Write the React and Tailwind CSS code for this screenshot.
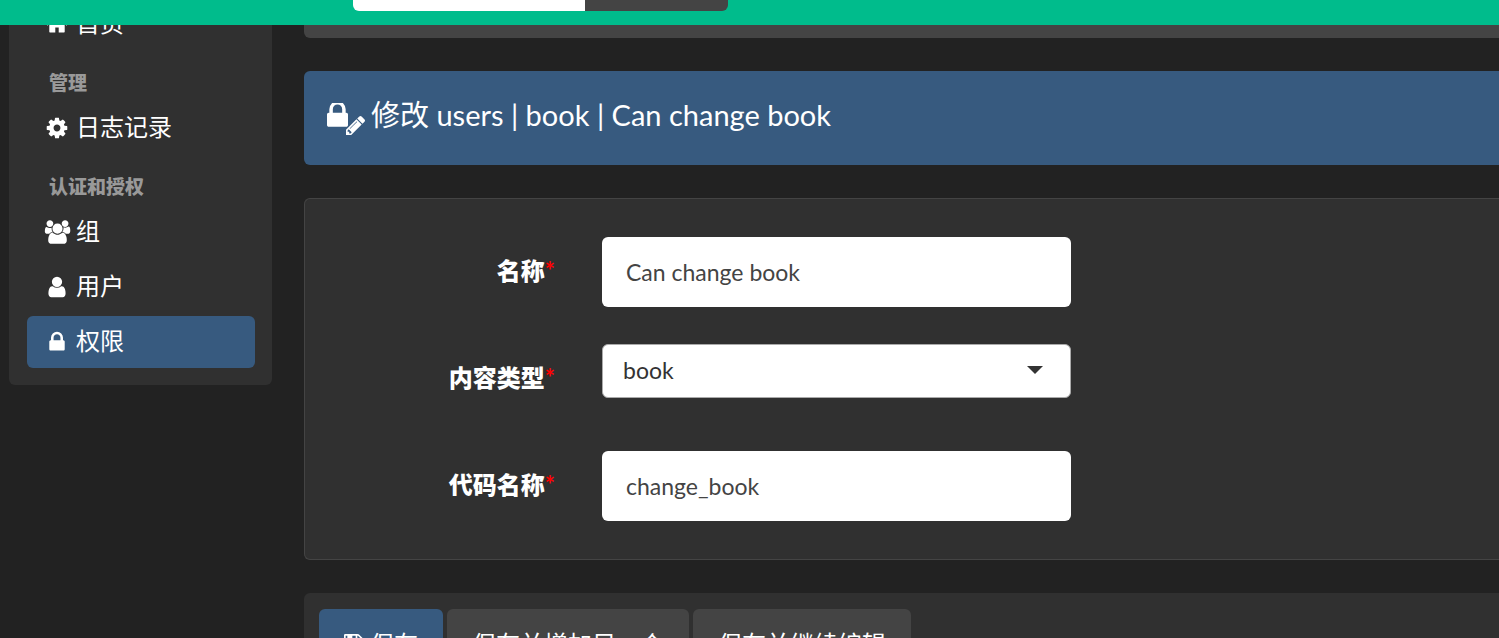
import React from "react";

const PATHS = {
  home: "M1472 992v480q0 26-19 45t-45 19h-384v-384h-256v384h-384q-26 0-45-19t-19-45v-480q0-1 .5-3t.5-3l575-474 575 474q1 2 1 6zm223-69l-62 74q-8 9-21 11h-3q-13 0-21-7l-692-577-692 577q-12 8-24 7-13-2-21-11l-62-74q-8-10-7-23.5t11-21.5l719-599q32-26 76-26t76 26l244 204v-195q0-14 9-23t23-9h192q14 0 23 9t9 23v408l219 182q10 8 11 21.5t-7 23.5z",
  cog: "M1152 896q0-106-75-181t-181-75-181 75-75 181 75 181 181 75 181-75 75-181zm512-109v222q0 12-8 23t-20 13l-185 28q-19 54-39 91 35 50 107 138 10 12 10 25t-9 23q-27 37-99 108t-94 71q-12 0-26-9l-138-108q-44 23-91 38-16 136-29 186-7 28-36 28h-222q-14 0-24.5-8.5t-11.5-21.5l-28-184q-49-16-90-37l-141 107q-10 9-25 9-14 0-25-11-126-114-165-168-7-10-7-23 0-12 8-23 15-21 51-66.5t54-70.5q-27-50-41-99l-183-27q-13-2-21-12.5t-8-23.5v-222q0-12 8-23t19-13l186-28q14-46 39-92-40-57-107-138-10-12-10-24 0-10 9-23 26-36 98.5-107.5t94.5-71.5q13 0 26 10l138 107q44-23 91-38 16-136 29-186 7-28 36-28h222q14 0 24.5 8.5t11.5 21.5l28 184q49 16 90 37l142-107q9-9 24-9 13 0 25 10 129 119 165 170 7 8 7 22 0 12-8 23-15 21-51 66.5t-54 70.5q26 50 41 98l183 28q13 2 21 12.5t8 23.5z",
  users: "M657 896q-162 5-265 128h-134q-82 0-138-40.5t-56-118.5q0-353 124-353 6 0 43.5 21t97.5 42.5 119 21.5q67 0 133-23-5 37-5 66 0 159 93 287zm1071 637q0 120-73 189.5t-194 69.5h-874q-121 0-194-69.5t-73-189.5q0-53 3.5-103.5t14-109 26.5-108.5 43-97.5 62-81 85.5-53.5 111.5-20q10 0 43 21.5t73 48 107 48 135 21.5 135-21.5 107-48 73-48 43-21.5q61 0 111.5 20t85.5 53.5 62 81 43 97.5 26.5 108.5 14 109 3.5 103.5zm-1024-1277q0 106-75 181t-181 75-181-75-75-181 75-181 181-75 181 75 75 181zm704 384q0 159-112.5 271.5t-271.5 112.5-271.5-112.5-112.5-271.5 112.5-271.5 271.5-112.5 271.5 112.5 112.5 271.5zm576 225q0 78-56 118.5t-138 40.5h-134q-103-123-265-128 93-128 93-287 0-29-5-66 66 23 133 23 59 0 119-21.5t97.5-42.5 43.5-21q124 0 124 353zm-128-609q0 106-75 181t-181 75-181-75-75-181 75-181 181-75 181 75 75 181z",
  user: "M1536 1399q0 109-62.5 187t-150.5 78h-854q-88 0-150.5-78t-62.5-187q0-85 8.5-160.5t31.5-152 58.5-131 94-89 134.5-34.5q131 128 313 128t313-128q76 0 134.5 34.5t94 89 58.5 131 31.5 152 8.5 160.5zm-256-887q0 159-112.5 271.5t-271.5 112.5-271.5-112.5-112.5-271.5 112.5-271.5 271.5-112.5 271.5 112.5 112.5 271.5z",
  lock: "M640 768h512v-192q0-106-75-181t-181-75-181 75-75 181v192zm832 96v576q0 40-28 68t-68 28h-960q-40 0-68-28t-28-68v-576q0-40 28-68t68-28h32v-192q0-184 132-316t316-132 316 132 132 316v192h32q40 0 68 28t28 68z",
  pencil: "M491 1536l91-91-235-235-91 91v107h128v128h107zm523-928q0-22-22-22-10 0-17 7l-542 542q-7 7-7 17 0 22 22 22 10 0 17-7l542-542q7-7 7-17zm-54-192l416 416-832 832h-416v-416zm683 96q0 53-37 90l-166 166-416-416 166-165q36-38 90-38 53 0 91 38l235 234q37 39 37 91z",
  save: "M512 1536h768v-384h-768v384zm896 0h128v-896q0-14-10-38.5t-20-34.5l-281-281q-10-10-34-20t-39-10v416q0 40-28 68t-68 28h-576q-40 0-68-28t-28-68v-416h-128v1280h128v-416q0-40 28-68t68-28h832q40 0 68 28t28 68v416zm-384-928v-320q0-13-9.5-22.5t-22.5-9.5h-192q-13 0-22.5 9.5t-9.5 22.5v320q0 13 9.5 22.5t22.5 9.5h192q13 0 22.5-9.5t9.5-22.5zm640 32v928q0 40-28 68t-68 28h-1344q-40 0-68-28t-28-68v-1344q0-40 28-68t68-28h928q40 0 88 20t76 48l280 280q28 28 48 76t20 88z",
};

function Icon({ name, box = "0 0 1792 1792", className = "h-6 w-6" }) {
  return (
    <svg viewBox={box} className={className} fill="currentColor" aria-hidden="true">
      <path d={PATHS[name]} />
    </svg>
  );
}

function NavItem({ icon, box, iconClass, active, children }) {
  return (
    <li>
      <a
        href="#"
        aria-current={active ? "page" : undefined}
        className={
          "flex h-[52px] items-center gap-1 rounded-md px-[15px] text-2xl text-white " +
          (active ? "bg-[#375a7f]" : "")
        }
      >
        <span className="flex w-[30px] shrink-0 justify-center">
          <Icon name={icon} box={box} className={iconClass} />
        </span>
        <span className="pb-0.5">{children}</span>
      </a>
    </li>
  );
}

function NavHeading({ children }) {
  return (
    <h2 className="pt-[21px] pr-3 pb-[7px] pl-[22px] text-[19px] leading-6 font-black text-[#999]">
      {children}
    </h2>
  );
}

function Field({ id, label, children }) {
  return (
    <div className="flex min-h-[70px] gap-[47px]">
      <label
        htmlFor={id}
        className="flex h-[70px] w-[250px] shrink-0 items-center justify-end pb-0.5 text-2xl font-black text-white"
      >
        {label}
        <span className="font-bold text-[#f00]">*</span>
      </label>
      <div className="w-full max-w-[469px]">{children}</div>
    </div>
  );
}

const inputClass =
  "h-[70px] w-full rounded-md bg-white px-6 text-[23px] text-[#444] outline-none";

const buttonClass =
  "flex h-[70px] items-center gap-1.5 rounded-md px-[25px] text-2xl whitespace-nowrap text-white";

export default function App() {
  return (
    <div className="flex h-screen flex-col overflow-hidden bg-[#222] font-[Lato,'Noto_Sans_CJK_SC',sans-serif]">
      <header className="flex h-[25px] shrink-0 items-end overflow-hidden bg-[#00bc8c] pb-[14px] pl-[353px]">
        <form className="flex shrink-0" onSubmit={(e) => e.preventDefault()}>
          <input type="search" aria-label="搜索" className="h-[70px] w-[232px] rounded-l-md bg-white px-6 text-[23px] outline-none" />
          <button type="submit" aria-label="搜索" className="h-[70px] w-[143px] rounded-r-md bg-[#444]" />
        </form>
      </header>

      <div className="flex min-h-0 flex-1 items-start gap-8 overflow-hidden pl-[9px]">
        <nav className="w-[263px] shrink-0 overflow-hidden rounded-b-md bg-[#303030] pr-[17px] pb-[17px] pl-[18px]">
          <ul className="-mt-[27px]">
            <NavItem icon="home">首页</NavItem>
          </ul>
          <NavHeading>管理</NavHeading>
          <ul>
            <NavItem icon="cog">日志记录</NavItem>
          </ul>
          <NavHeading>认证和授权</NavHeading>
          <ul className="flex flex-col gap-[3px]">
            <NavItem icon="users" box="0 0 2048 1792" iconClass="h-6 w-[27px]">组</NavItem>
            <NavItem icon="user">用户</NavItem>
            <NavItem icon="lock" active>权限</NavItem>
          </ul>
        </nav>

        <main className="flex min-w-0 flex-1 flex-col gap-[33px]">
          <div className="h-[13px] rounded-bl-md bg-[#444]" />

          <h1 className="flex h-[94px] items-center gap-[6px] rounded-l-md bg-[#375a7f] px-[23px] pb-1 text-[29px] text-white">
            <svg viewBox="0 0 38 32" className="mt-[5px] h-8 w-[38px] shrink-0" fill="currentColor" aria-hidden="true">
              <svg x="0" y="0" width="21" height="24" viewBox="320 256 1152 1280">
                <path d={PATHS.lock} />
              </svg>
              <svg x="19" y="13" width="19" height="19" viewBox="128 149 1515 1515">
                <path d={PATHS.pencil} />
              </svg>
            </svg>
            <span className="pb-0.5">修改 users | book | Can change book</span>
          </h1>

          <form className="flex flex-col gap-[33px]" onSubmit={(e) => e.preventDefault()}>
            <section className="flex flex-col gap-[37px] rounded-l-md border border-r-0 border-[#444] bg-[#303030] py-[38px]">
              <Field id="name" label="名称">
                <input id="name" type="text" defaultValue="Can change book" className={inputClass} />
              </Field>
              <Field id="content-type" label="内容类型">
                <div className="relative">
                  <select
                    id="content-type"
                    defaultValue="book"
                    className="h-[54px] w-full appearance-none rounded-md border border-[#aaa] bg-white px-5 pb-0.5 text-[23px] text-[#333] outline-none"
                  >
                    <option value="book">book</option>
                  </select>
                  <svg
                    viewBox="0 0 16 8"
                    className="pointer-events-none absolute top-[22px] right-7 h-2 w-4"
                    fill="#333"
                    aria-hidden="true"
                  >
                    <path d="M0 0h16L8 8z" />
                  </svg>
                </div>
              </Field>
              <Field id="codename" label="代码名称">
                <input id="codename" type="text" defaultValue="change_book" className={inputClass} />
              </Field>
            </section>

            <div className="flex gap-1 rounded-l-md bg-[#303030] px-[15px] py-4">
              <button type="submit" className={buttonClass + " bg-[#375a7f]"}>
                <Icon name="save" box="128 128 1536 1536" className="h-5 w-5" />
                保存
              </button>
              <button type="submit" className={buttonClass + " bg-[#444]"}>保存并增加另一个</button>
              <button type="submit" className={buttonClass + " bg-[#444]"}>保存并继续编辑</button>
            </div>
          </form>
        </main>
      </div>
    </div>
  );
}
